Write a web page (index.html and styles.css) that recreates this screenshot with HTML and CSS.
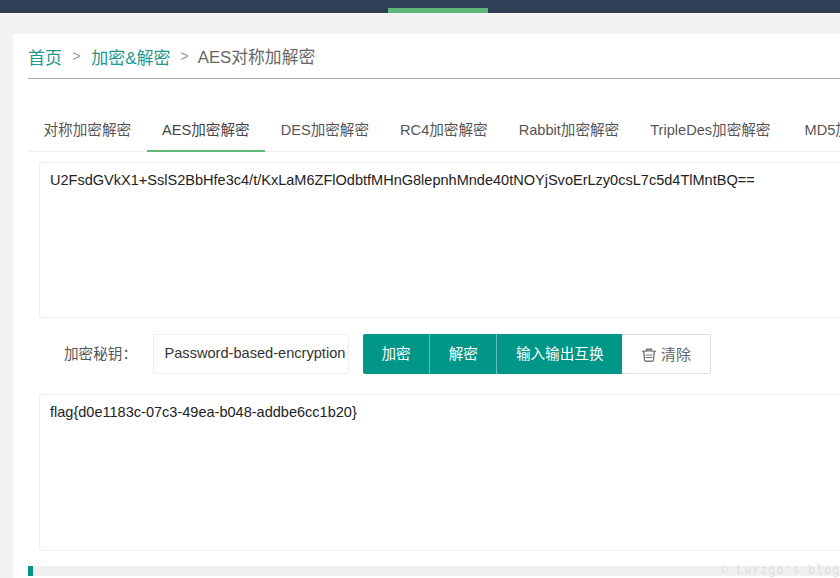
FILE: index.html
```html
<!DOCTYPE html>
<html lang="en">
<head>
  <meta charset="UTF-8">
  <title>AES对称加解密</title>
  <link rel="stylesheet" href="styles.css">
</head>
<body>
  <div class="topbar">
    <div class="topbar-active"></div>
  </div>
  <div class="main">
    <div class="card">
      <div class="breadcrumb">
        <a class="crumb-link">首页</a>
        <span class="crumb-sep">&gt;</span>
        <a class="crumb-link">加密&amp;解密</a>
        <span class="crumb-sep crumb-sep-last">&gt;</span>
        <span class="crumb-current">AES对称加解密</span>
      </div>
      <ul class="tabs">
        <li>对称加密解密</li>
        <li class="active">AES加密解密</li>
        <li>DES加密解密</li>
        <li>RC4加密解密</li>
        <li>Rabbit加密解密</li>
        <li>TripleDes加密解密</li>
        <li class="tab-last">MD5加密</li>
      </ul>
      <div class="panel">
        <div class="textbox">U2FsdGVkX1+SslS2BbHfe3c4/t/KxLaM6ZFlOdbtfMHnG8lepnhMnde40tNOYjSvoErLzy0csL7c5d4TlMntBQ==</div>
        <div class="controls">
          <label class="key-label">加密秘钥：</label>
          <div class="key-input">Password-based-encryption</div>
          <div class="btn-group">
            <button class="btn">加密</button>
            <button class="btn">解密</button>
            <button class="btn">输入输出互换</button>
            <button class="btn btn-clear">
              <svg class="trash" viewBox="0 0 16 16" width="16" height="16">
                <path d="M1 4.5c3-.8 11-.8 14 0M5.5 3.8V2.2h5v1.6" fill="none" stroke="#777" stroke-width="1.4"/>
                <path d="M2.8 5l.7 8c.1.8.6 1.2 1.3 1.2h6.4c.7 0 1.2-.4 1.3-1.2l.7-8" fill="none" stroke="#777" stroke-width="1.4"/>
                <path d="M4.5 8h7M4.5 10.5h7" stroke="#777" stroke-width="1"/>
              </svg>
              <span>清除</span>
            </button>
          </div>
        </div>
        <div class="textbox textbox-bottom">flag{d0e1183c-07c3-49ea-b048-addbe6cc1b20}</div>
      </div>
      <div class="next-section"><span class="next-mark"></span></div>
    </div>
  </div>
  <div class="watermark">© Lwrzgo's blog</div>
</body>
</html>
```

FILE: styles.css
```css
* {
  box-sizing: border-box;
}
html, body {
  height: 100%;
}
body {
  margin: 0;
  height: 578px;
  overflow: hidden;
  background: #f2f2f2;
  color: #333;
  font-family: "Liberation Sans", "Noto Sans CJK SC", sans-serif;
  position: relative;
}
.topbar {
  height: 14px;
  background: #2f4056;
  border-bottom: 1px solid #fff;
  padding-left: 388px;
  padding-top: 8px;
}
.topbar-active {
  width: 100px;
  height: 5px;
  background: #5fb878;
}
.main {
  padding: 20px 0 0 13px;
}
.card {
  width: 1000px;
  height: 544px;
  background: #fff;
  padding: 0 0 0 15px;
}
.breadcrumb {
  height: 45px;
  border-bottom: 1px solid #a6a6a6;
  display: flex;
  align-items: center;
  font-size: 17px;
}
.crumb-link {
  color: #22998c;
}
.crumb-sep {
  color: #999;
  font-size: 14px;
  margin: 0 10.5px;
}
.crumb-sep-last {
  margin: 0 9px 0 10px;
}
.crumb-current {
  color: #666;
  font-size: 16.8px;
}
.tabs {
  list-style: none;
  margin: 30px 0 0;
  padding: 0;
  height: 43px;
  display: flex;
  border-bottom: 1px solid #eee;
  font-size: 14.6px;
  color: #555;
}
.tabs li {
  padding: 0 15.5px;
  line-height: 42px;
  white-space: nowrap;
}
.tabs li.active {
  color: #444;
  height: 43px;
  border-bottom: 2px solid #5fb878;
}
.tabs li.tab-last {
  margin-left: 3px;
}
.panel {
  padding: 10px 0 0 11px;
}
.textbox {
  height: 156px;
  border: 1px solid #eee;
  border-radius: 2px;
  padding: 8px 10px;
  font-size: 14.54px;
  line-height: 18px;
  color: #222;
  background: #fff;
}
.textbox-bottom {
  height: 157px;
}
.controls {
  display: flex;
  align-items: center;
  height: 40px;
  margin: 16px 0 20px;
}
.key-label {
  width: 114px;
  padding: 0 0 3px 25px;
  font-size: 14.6px;
  color: #555;
}
.key-input {
  width: 196px;
  height: 40px;
  line-height: 37px;
  border: 1px solid #eee;
  border-radius: 2px;
  padding-left: 10.5px;
  font-size: 14.6px;
  color: #333;
  white-space: nowrap;
}
.btn-group {
  display: flex;
  margin-left: 14px;
}
.btn {
  height: 40px;
  padding: 0 18.5px 3px;
  border: none;
  border-left: 1px solid rgba(255,255,255,.4);
  background: #009688;
  color: #fff;
  font-family: inherit;
  font-size: 14.6px;
}
.btn:first-child {
  border-left: none;
  border-radius: 2px 0 0 2px;
}
.btn-clear {
  width: 89px;
  padding: 0 0 2px;
  background: #fff;
  color: #666;
  border: 1px solid #ddd;
  border-left: none;
  border-radius: 0 2px 2px 0;
  font-size: 15px;
  display: flex;
  align-items: center;
  justify-content: center;
  gap: 4px;
}
.trash {
  margin-top: 3px;
}
.next-section {
  height: 10px;
  margin-top: 15px;
  background: #f0f0f0;
}
.next-mark {
  display: block;
  width: 5px;
  height: 10px;
  background: #009688;
}
.watermark {
  position: absolute;
  right: 0;
  top: 563px;
  font-family: "DejaVu Sans Mono", monospace;
  font-size: 12px;
  letter-spacing: .75px;
  color: #dedede;
  white-space: nowrap;
}
```
